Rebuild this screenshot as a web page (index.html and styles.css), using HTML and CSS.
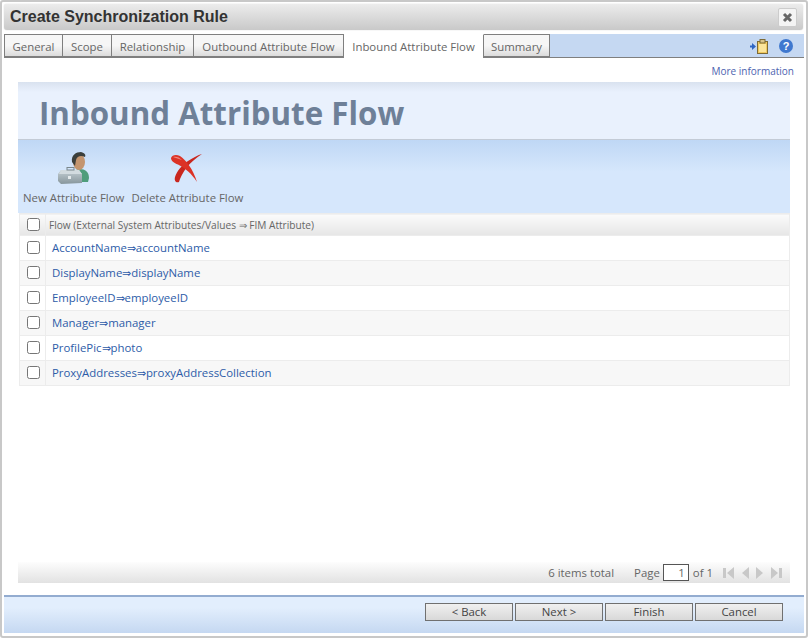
FILE: index.html
```html
<!DOCTYPE html>
<html>
<head>
  <meta charset="UTF-8">
  <title>Create Synchronization Rule</title>
  <link rel="stylesheet" href="styles.css">
</head>
<body>
  <div class="dialog">
    <div class="title-bar">
      <span class="title">Create Synchronization Rule</span>
      <button class="close-btn">
        <svg width="11" height="11" viewBox="0 0 11 11"><path d="M2 2 L9 9 M9 2 L2 9" stroke="#666" stroke-width="3"/></svg>
      </button>
    </div>

    <div class="tab-bar">
      <a class="tab tab-general">General</a>
      <a class="tab tab-scope">Scope</a>
      <a class="tab tab-relationship">Relationship</a>
      <a class="tab tab-outbound">Outbound Attribute Flow</a>
      <a class="tab tab-inbound active">Inbound Attribute Flow</a>
      <a class="tab tab-summary">Summary</a>
      <div class="tab-icons">
        <svg width="19" height="18" viewBox="0 0 19 18">
          <path d="M0 8.500 H2 V6 L6 9.500 L2 13 V10.500 H0 Z" fill="#2f66c4"/>
          <rect x="7.500" y="4.500" width="10" height="12" fill="#f0c95f" stroke="#7d6a36"/>
          <rect x="10" y="2.500" width="5" height="3.500" fill="#d9c58a" stroke="#7d6a36"/>
          <rect x="9" y="7" width="7" height="8" fill="#fbe59b"/>
        </svg>
        <svg width="14" height="14" viewBox="0 0 14 14">
          <circle cx="7" cy="7" r="7" fill="#3f78cf"/>
          <text x="7" y="11" text-anchor="middle" class="help-mark">?</text>
        </svg>
      </div>
    </div>

    <div class="info-row"><a class="info-link">More information</a></div>

    <div class="content">
      <div class="page-head">
        <h1>Inbound Attribute Flow</h1>
      </div>

      <div class="toolbar">
        <div class="tool">
          <svg width="32" height="32" viewBox="0 0 32 32">
            <defs>
              <linearGradient id="boxFill" x1="0" y1="0" x2="0" y2="1">
                <stop offset="0" stop-color="#c4cfd4"/>
                <stop offset="1" stop-color="#87969c"/>
              </linearGradient>
            </defs>
            <path d="M15 26 C14 20 18 17 22 17 C27 17 31 20 31 26 L30 30 L17 30 Z" fill="#4f9d7b"/>
            <ellipse cx="21" cy="10" rx="6" ry="8" fill="#c4956f"/>
            <path d="M14 10 C13 3 18 0 23 0 C27 1 28 3 27 5 C23 3 19 4 18 8 L17 14 Z" fill="#3b3f3c"/>
            <path d="M0 22 L3 18 L21 18 L24 22 L24 31 L3 32 L0 29 Z" fill="url(#boxFill)"/>
            <path d="M3 18 L21 18 L24 22 L1 22 Z" fill="#d2dbdf"/>
            <rect x="9" y="15.500" width="7" height="2.500" fill="none" stroke="#7a878c"/>
            <rect x="10" y="24" width="3" height="3" fill="#e4eaec"/>
          </svg>
          <span>New Attribute Flow</span>
        </div>
        <div class="tool">
          <svg width="32" height="32" viewBox="0 0 32 30">
            <path d="M31 1 C25 5 20 9 16 14 C12 19 9 25 8 29 C5 30 3 28 4 24 C6 18 11 12 17 8 C22 5 27 2 31 1 Z" fill="#c9271f"/>
            <path d="M0 5 C1 2 5 1 9 3 C15 7 22 16 26 29 C21 21 14 15 7 11.500 C3 10 0 8 0 5 Z" fill="#dc3226"/>
            <path d="M2 4 C5 3 8 4 11 7 C8 6 5 5 2 4 Z" fill="#ef8a80"/>
          </svg>
          <span>Delete Attribute Flow</span>
        </div>
      </div>

      <table class="flow-table">
        <tr class="head-row">
          <td class="check-cell"><span class="check"></span></td>
          <td class="head-text">Flow (External System Attributes/Values ⇒ FIM Attribute)</td>
        </tr>
        <tr>
          <td class="check-cell"><span class="check"></span></td>
          <td><a>AccountName⇒accountName</a></td>
        </tr>
        <tr class="alt">
          <td class="check-cell"><span class="check"></span></td>
          <td><a>DisplayName⇒displayName</a></td>
        </tr>
        <tr>
          <td class="check-cell"><span class="check"></span></td>
          <td><a>EmployeeID⇒employeeID</a></td>
        </tr>
        <tr class="alt">
          <td class="check-cell"><span class="check"></span></td>
          <td><a>Manager⇒manager</a></td>
        </tr>
        <tr>
          <td class="check-cell"><span class="check"></span></td>
          <td><a>ProfilePic⇒photo</a></td>
        </tr>
        <tr class="alt">
          <td class="check-cell"><span class="check"></span></td>
          <td><a>ProxyAddresses⇒proxyAddressCollection</a></td>
        </tr>
      </table>

      <div class="pager">
        <span class="total">6 items total</span>
        <span>Page</span>
        <span class="page-box">1</span>
        <span>of 1</span>
        <div class="pager-icons">
          <svg width="12" height="12" viewBox="0 0 12 12"><path d="M0 1 H3 V11 H0 Z M11 0 V12 L4 6 Z" fill="#c8c8c8"/></svg>
          <svg width="7" height="12" viewBox="0 0 7 12"><path d="M7 0 V12 L0 6 Z" fill="#c8c8c8"/></svg>
          <svg width="7" height="12" viewBox="0 0 7 12"><path d="M0 0 V12 L7 6 Z" fill="#c8c8c8"/></svg>
          <svg width="12" height="12" viewBox="0 0 12 12"><path d="M1 0 V12 L8 6 Z M9 1 H12 V11 H9 Z" fill="#c8c8c8"/></svg>
        </div>
      </div>
    </div>

    <div class="footer">
      <button class="foot-btn">&lt; Back</button>
      <button class="foot-btn">Next &gt;</button>
      <button class="foot-btn">Finish</button>
      <button class="foot-btn">Cancel</button>
    </div>
  </div>
</body>
</html>
```

FILE: styles.css
```css
html, body {
  margin: 0;
  height: 100%;
}

body {
  font-family: "Open Sans", Arial, sans-serif;
  font-size: 11px;
  color: #555;
  background-color: #fff;
}

.dialog {
  box-sizing: border-box;
  width: 808px;
  height: 638px;
  padding: 0 2px 3px 0;
  border: 2px solid #c8c8c8;
  border-radius: 3px;
  display: flex;
  flex-direction: column;
  background-color: #fff;
}

.title-bar {
  height: 26px;
  margin: 2px 1px 4px 2px;
  padding: 0 6px 0 6px;
  display: flex;
  align-items: center;
  justify-content: space-between;
  border-radius: 3px;
  background: linear-gradient(#ececec, #c9c9c9);
  box-shadow: 0 0 1px #aaa;
}

.title {
  font-family: "Liberation Sans", Arial, sans-serif;
  font-size: 16px;
  font-weight: bold;
  color: #333;
}

.close-btn {
  width: 19px;
  height: 19px;
  padding: 0;
  display: flex;
  align-items: center;
  justify-content: center;
  background-color: #f4f4f4;
  border: 1px solid #ccc;
  border-radius: 2px;
}

.tab-bar {
  box-sizing: border-box;
  height: 24px;
  margin-left: 2px;
  display: flex;
  background-color: #c5d8f2;
  border-bottom: 1px solid #7f7f7f;
}

.tab {
  padding: 0;
  line-height: 23px;
  height: 23px;
  box-sizing: border-box;
  text-align: center;
  font-size: 11.4px;
  color: #666;
  border: 1px solid #7f7f7f;
  border-left-width: 0;
  background: linear-gradient(#f6f6f6 50%, #dcdcdc);
}

.tab:first-child {
  border-left-width: 1px;
}

.tab-general { width: 59px; }
.tab-scope { width: 49px; }
.tab-relationship { width: 82px; }
.tab-outbound { width: 150px; }
.tab-inbound { width: 140px; }
.tab-summary { width: 66px; }

.tab.active {
  height: 24px;
  background: #fff;
  border-top-color: #fff;
  border-bottom: 0;
}

.tab-icons {
  margin-left: auto;
  padding-right: 11px;
  display: flex;
  align-items: center;
  gap: 10px;
}

.help-mark {
  font-family: "Liberation Sans", Arial, sans-serif;
  font-size: 11px;
  font-weight: bold;
  fill: #fff;
}

.info-row {
  height: 24px;
  padding-right: 10px;
  text-align: right;
  line-height: 26px;
}

.info-link {
  color: #4d63b0;
  font-size: 10px;
}

.content {
  flex: 1;
  width: 772px;
  margin-left: 16px;
  display: flex;
  flex-direction: column;
}

.page-head {
  height: 57px;
  padding-left: 21px;
  background: linear-gradient(#d9e2ef, #e9f1fd 10px);
  border-bottom: 1px solid #c3cbd6;
}

.page-head h1 {
  margin: 0;
  font-size: 31.3px;
  line-height: 62px;
  font-weight: bold;
  color: #6e8098;
}

.toolbar {
  height: 73px;
  padding-left: 5px;
  display: flex;
  gap: 7px;
  background: linear-gradient(#bfd7f5, #d6e7fc 32px);
}

.tool {
  display: flex;
  flex-direction: column;
  align-items: center;
  justify-content: flex-end;
  padding-bottom: 8px;
  font-size: 11.4px;
  color: #666;
}

.tool svg {
  margin-bottom: 6px;
}

.flow-table {
  width: 771px;
  margin-left: 1px;
  border-collapse: collapse;
  font-size: 11.4px;
}

.flow-table td {
  height: 25px;
  padding: 0 0 2px 6px;
  box-sizing: border-box;
  border-top: 1px solid #ececec;
  border-bottom: 1px solid #ececec;
}

.flow-table tr.alt td {
  background-color: #f7f7f7;
}

.flow-table a {
  color: #2d5ca8;
}

.flow-table .check-cell {
  width: 26px;
  padding: 0 0 1px 7px;
  border-left: 1px solid #ececec;
  border-right: 1px solid #ececec;
}

.flow-table td:last-child {
  border-right: 1px solid #ececec;
}

.flow-table .head-row td {
  height: 22px;
  padding-bottom: 0;
  background: linear-gradient(#fbfbfb, #e6e6e6);
  font-size: 10.150px;
  color: #666;
}

.flow-table .head-text {
  padding-left: 3px;
}

.check {
  display: block;
  box-sizing: border-box;
  width: 13px;
  height: 13px;
  background-color: #fff;
  border: 1px solid #767676;
  border-radius: 2.500px;
}

.pager {
  margin-top: auto;
  margin-bottom: 12px;
  height: 21px;
  padding-right: 8px;
  display: flex;
  align-items: center;
  justify-content: flex-end;
  gap: 4px;
  background: linear-gradient(#fdfdfd, #e2e2e2);
  font-size: 11.4px;
  color: #666;
}

.total {
  margin-right: 16px;
}

.page-box {
  box-sizing: border-box;
  width: 26px;
  height: 17px;
  margin-left: -1px;
  padding-right: 3px;
  line-height: 15px;
  text-align: right;
  background-color: #fff;
  border: 1px solid #555;
}

.pager-icons {
  margin-left: 6px;
  display: flex;
  align-items: center;
  gap: 7px;
}

.footer {
  box-sizing: border-box;
  height: 38px;
  margin-left: 2px;
  padding: 6px 21px 0 0;
  display: flex;
  justify-content: flex-end;
  gap: 2px;
  border-top: 2px solid #93acd0;
  background: linear-gradient(#e2eefd 30%, #c5d8f1);
}

.foot-btn {
  box-sizing: border-box;
  width: 88px;
  height: 18px;
  padding: 0;
  font-family: "Open Sans", Arial, sans-serif;
  font-size: 11.4px;
  line-height: 14px;
  color: #444;
  border: 1px solid #707070;
  background: linear-gradient(#f0f0f0, #d8d8d8);
}
```
